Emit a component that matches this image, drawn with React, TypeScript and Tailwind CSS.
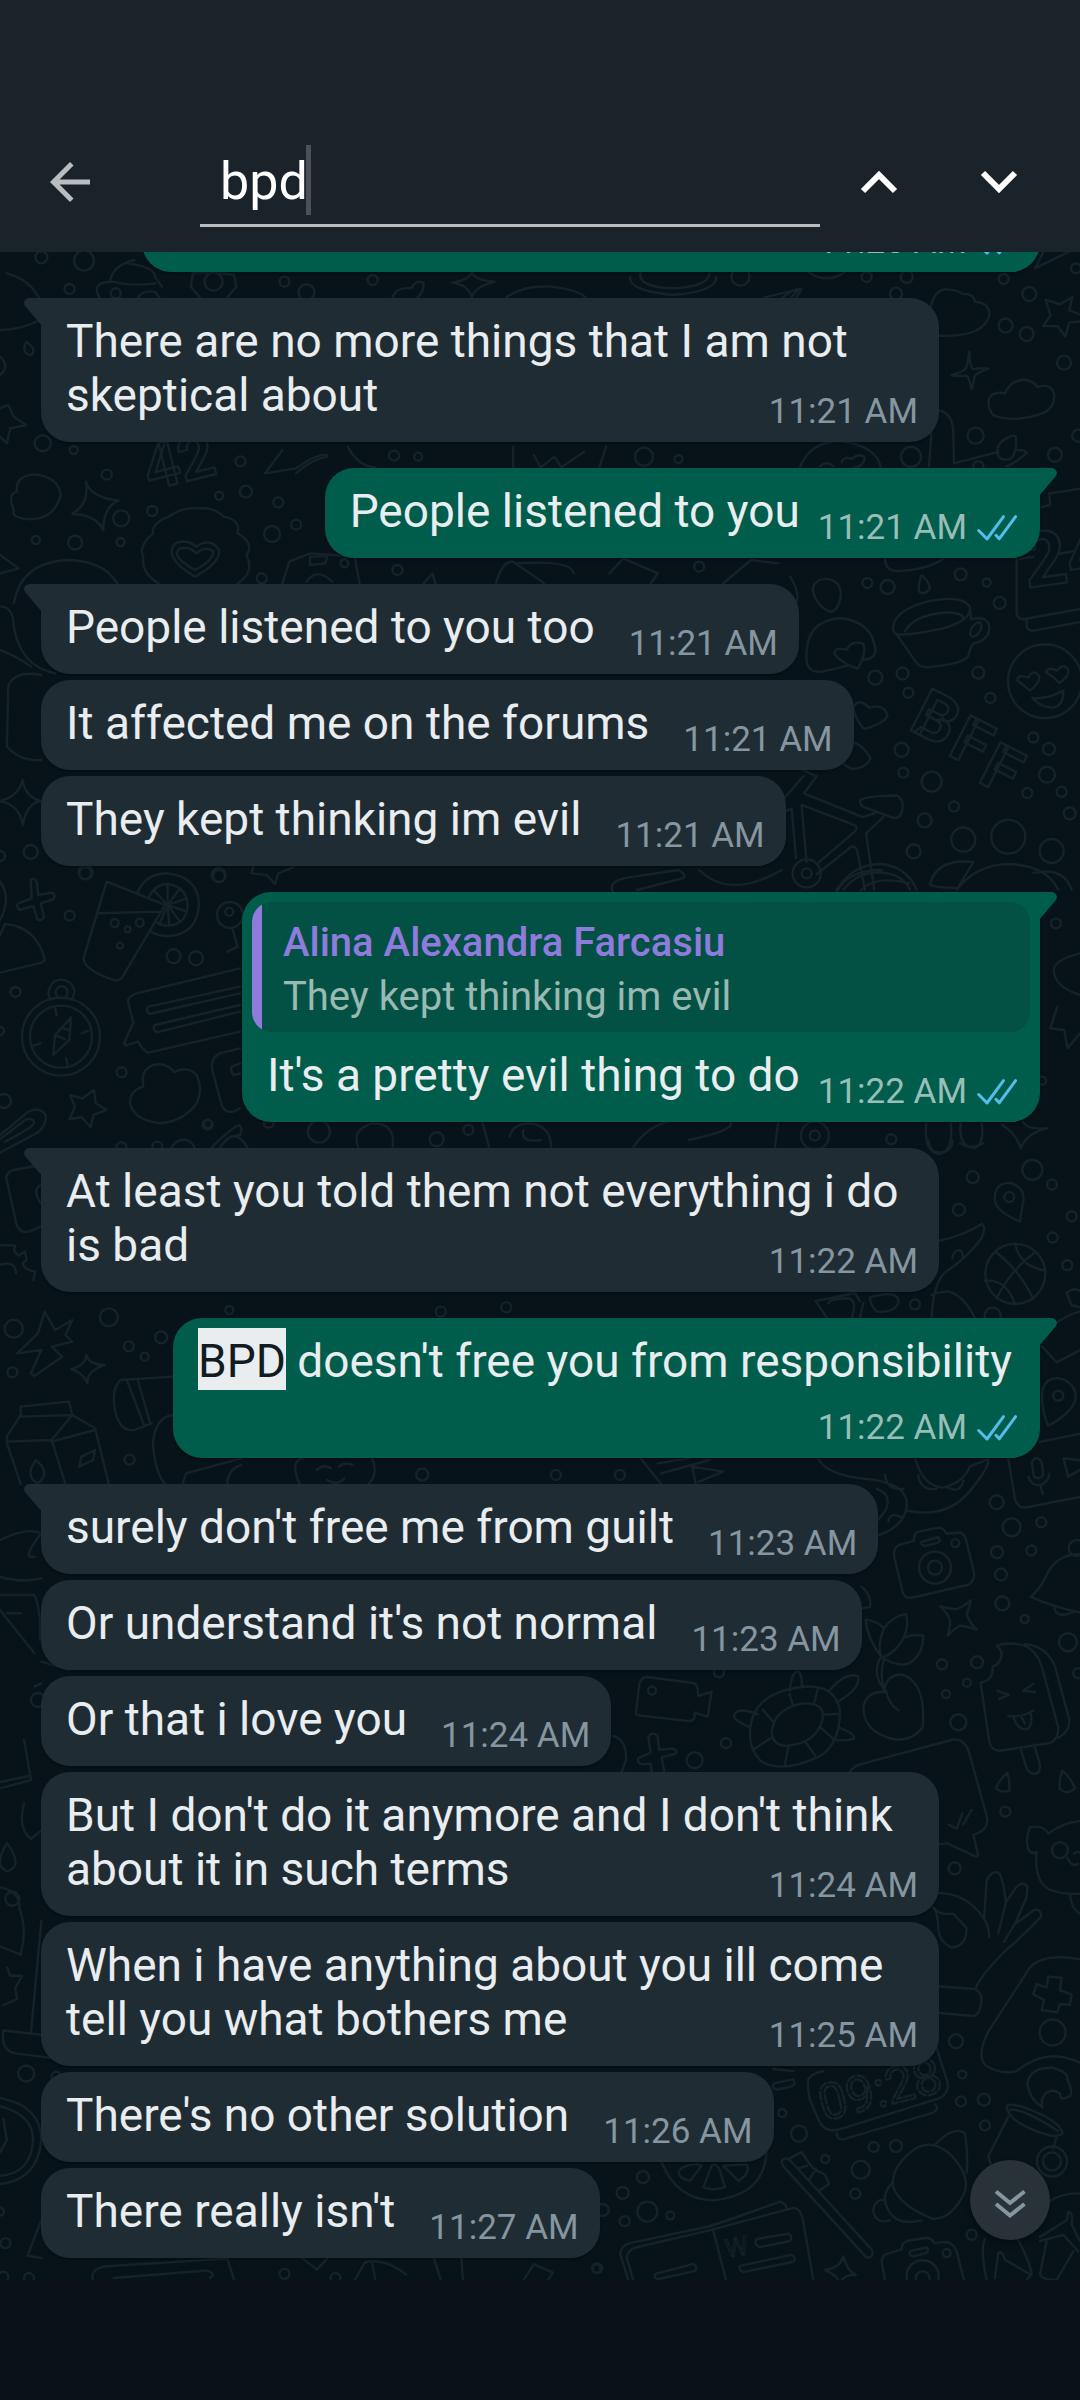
import React, { useState } from "react";
import { MdArrowBack } from "react-icons/md";

/* ---------- Wallpaper ---------- */

type Cluster = {
  x: number;
  y: number;
  sx: number;
  sy: number;
  d: string;
  rings: [number, number, number][];
};

const clusters: Cluster[] = [
  {
    x: 780, y: 250, sx: 0.3333, sy: 0.408,
    d:
      "M452 140 Q465 90 510 97 Q540 100 548 108 Q580 105 585 127 Q630 130 628 160 Q610 215 477 210" +
      "M900 158 L868 148 L877 115 L840 133 L797 122 L812 160 L790 186 L833 187 L856 212 L868 178 L900 175" +
      "M568 250 Q570 290 580 292 Q605 288 626 291 Q590 302 584 308 Q580 330 575 341 Q566 312 560 308 Q535 310 514 307 Q550 298 558 290 Q565 270 568 250Z" +
      "M640 405 Q620 385 628 362 Q645 345 675 352 Q690 318 735 318 Q765 322 772 336 Q815 325 823 355 Q825 385 790 400 Q700 425 640 405Z" +
      "M447 530 L455 440 M477 393 Q520 400 520 450 L522 523 L655 495 M655 505 Q645 480 672 465 Q705 450 708 458 Q712 500 690 512 Q665 518 655 505 M710 490 Q740 490 740 498 Q700 525 680 530" +
      "M807 597 L900 585 M808 597 L810 625 L785 630" +
      "M710 757 V890 Q712 905 730 905 L900 880 M740 907 V922 Q745 935 760 933 L900 912 M835 745 L880 738 M720 757 L760 752" +
      "M712 1055 Q712 1038 745 1048 Q760 1025 778 1045 Q780 1060 750 1080 Q730 1065 712 1055Z M798 1035 Q805 1020 832 1031 Q850 1010 865 1030 Q868 1045 838 1061 Q820 1045 798 1035Z M757 1098 Q800 1102 850 1080 Q852 1115 820 1122 Q780 1120 757 1098Z" +
      "M340 920 Q350 880 450 860 Q550 845 570 875 Q575 905 500 925 Q400 945 350 942 Q335 935 340 920Z M375 935 Q400 895 500 888 Q545 890 550 900 M350 942 L408 1010 Q420 1025 450 1022 Q550 1015 565 995 Q570 975 580 965 Q628 955 628 925 Q625 895 573 905 L570 875 M570 940 Q575 915 600 912 Q610 925 595 940 Q575 955 570 940Z" +
      "M425 797 Q410 830 420 840 Q440 845 450 828 Q445 810 425 797Z" +
      "M98 830 Q105 805 140 806 Q185 810 182 850 Q175 885 150 887 Q105 870 98 830Z" +
      "M80 1010 Q70 910 180 902 Q280 910 287 985 Q280 1005 245 1005 M205 1018 L125 1034 Q85 1035 80 1010 M163 990 Q165 972 200 980 Q215 955 250 965 Q260 990 233 1026 Q190 1015 163 990Z" +
      "M220 1122 Q235 1095 268 1122 Q310 1110 323 1140 Q315 1160 252 1174 Q225 1150 220 1122Z" +
      "M213 1210 Q235 1200 272 1245 Q260 1270 215 1272 L180 1255 M315 757 Q315 785 350 787 Q440 785 490 757" +
      "M60 532 Q90 470 180 468 Q290 480 302 532 M185 520 Q190 505 215 512 Q240 495 255 510 Q250 530 220 535 M120 530 Q140 515 160 530" +
      "M70 1275 L110 1290 L72 1332 L248 1390 L285 1380 M240 1350 Q250 1338 350 1337 Q370 1345 368 1365 Q365 1395 340 1392 L250 1365 Q240 1360 240 1350 M310 1390 L258 1430 L283 1568 M0 1355 L70 1290 M65 1365 L80 1500 M65 1360 L225 1410 Q235 1415 225 1425 L110 1505 M0 1380 L35 1370 L48 1490 M110 1530 L215 1462 Q228 1460 232 1475 L255 1568 M170 1568 Q220 1505 300 1505 Q380 1510 410 1568 M190 1568 Q230 1525 300 1525 Q370 1530 390 1568" +
      "M450 1555 Q470 1490 580 1500 L530 1568 Q590 1505 690 1505 Q800 1510 835 1568 M760 1527 Q850 1510 875 1568 M450 1555 Q455 1562 530 1564" +
      "M765 45 L790 5 M765 45 L865 5 M5 118 Q50 90 65 97 L50 115 M85 54 Q140 85 195 54 M30 800 Q60 840 50 860",
    rings: [
      [795, 1057, 37], [80, 1528, 5], [80, 1528, 14], [550, 1445, 12], [685, 1438, 17], [815, 1473, 12],
      [260, 66, 5], [380, 66, 6], [348, 107, 6], [671, 71, 5], [748, 108, 7], [677, 185, 7], [740, 206, 7], [852, 276, 7],
      [587, 455, 8], [393, 507, 10], [825, 502, 7], [895, 455, 6], [595, 530, 5], [542, 795, 6], [262, 816, 5], [323, 826, 7],
      [620, 815, 4], [659, 865, 6], [286, 1048, 7], [368, 1038, 6], [595, 1036, 6], [385, 1085, 5], [631, 1098, 5],
      [760, 1195, 5], [807, 1223, 6], [365, 1225, 7], [370, 1281, 5], [455, 1303, 10], [801, 1286, 8], [742, 1331, 5],
      [845, 1328, 5], [522, 1364, 5], [434, 1398, 7], [869, 1381, 6], [401, 1474, 7], [888, 45, 5],
    ],
  },
  {
    x: 780, y: 1140, sx: 0.3333, sy: 0.408,
    d:
      "M645 150 Q640 105 690 105 Q735 115 730 150 L720 200 Q650 175 645 150Z M787 640 Q780 585 835 583 Q890 595 887 635 Q875 670 805 700 Q790 675 787 640Z" +
      "M477 247 Q550 235 605 206 Q620 212 605 240 Q560 290 495 325 Q460 350 455 435 M455 380 Q480 370 510 372 Q555 385 585 437 M517 290 Q520 270 540 270 Q550 275 548 290" +
      "M706 256 Q720 310 797 320 M615 345 Q680 340 705 403 M648 275 Q720 320 760 390 M650 388 Q690 320 765 275" +
      "M107 395 L225 375 L240 395 M107 395 L140 435 M145 400 Q150 390 200 388 Q235 388 215 437 M240 435 L250 400 M270 385 Q360 365 355 400 Q340 425 290 420 Q270 405 270 385" +
      "M815 455 Q860 430 900 420 M785 505 L830 545 L900 515 M860 375 Q880 360 900 370 M860 375 L875 405 L900 410" +
      "M405 780 Q430 850 490 852 Q550 840 570 800 L625 782 Q630 800 570 860 Q500 930 380 908 M415 822 Q420 860 470 855 M500 850 Q540 870 550 835 M115 782 Q140 820 250 830 Q390 840 380 900 Q370 950 290 970 M290 855 Q340 870 315 910 L290 935 M315 820 Q320 860 370 855 M325 935 Q330 910 365 925" +
      "M685 782 L705 880 Q715 905 740 900 L900 875 M780 740 L900 720 M755 790 Q770 770 785 790 L790 820 Q780 835 762 825Z M745 825 Q755 850 785 845 Q808 835 808 818 M782 848 L788 868 M900 785 L850 780 L865 825 L900 808" +
      "M345 1030 Q335 1000 360 992 L402 982 Q400 965 415 960 L475 950 Q490 950 500 965 L540 962 Q555 965 560 985 L582 1060 Q585 1080 565 1090 L395 1122 Q375 1125 368 1108Z M425 985 L475 973 Q485 985 470 988 L435 995 Q420 992 425 985Z" +
      "M573 1128 Q565 1155 560 1162 Q570 1185 590 1200 Q550 1190 540 1190 Q520 1200 503 1215 Q512 1185 510 1178 Q500 1155 480 1143 Q520 1150 530 1150 Q550 1145 573 1128Z" +
      "M900 1015 Q830 1015 800 1065 Q790 1090 753 1120 Q820 1145 900 1158 M822 1145 Q830 1175 878 1157" +
      "M312 1197 Q340 1165 378 1162 Q390 1200 360 1235 Q330 1265 305 1268 Q260 1220 257 1175 Q295 1180 312 1197 Q290 1240 305 1268 Q370 1300 400 1275 Q430 1255 430 1215 Q400 1210 378 1218 M300 1270 Q275 1310 315 1350 M312 1272 Q295 1320 320 1355 Q325 1380 355 1398 M312 1350 Q320 1310 365 1310 Q440 1330 428 1440 Q400 1470 350 1470 Q250 1455 250 1390 Q260 1350 312 1353" +
      "M650 1240 Q670 1232 710 1235 Q765 1240 785 1290 L835 1440 Q835 1470 810 1478 L660 1497 Q635 1498 628 1475 L602 1330 Q640 1325 638 1290 Q665 1285 665 1255 Q660 1245 650 1240 M735 1236 Q800 1240 825 1290 L868 1420 Q870 1450 835 1465 M722 1492 L740 1540 Q755 1560 775 1550 Q783 1540 778 1525 L762 1482 M652 1350 L687 1360 L658 1370 M760 1333 L730 1350 L765 1353 M685 1412 Q730 1415 760 1398 M700 1412 Q710 1445 740 1445 Q760 1435 752 1405 M725 1415 L735 1430" +
      "M245 1095 Q275 1115 270 1145 L245 1148 M445 0 Q450 35 485 30 Q520 25 517 0 M540 8 Q570 25 610 8",
    rings: [
      [688, 140, 5], [835, 627, 5], [706, 328, 30], [465, 1048, 16], [465, 1048, 7], [526, 988, 4], [890, 1000, 8],
      [757, 73, 10], [578, 91, 6], [816, 109, 5], [537, 171, 6], [875, 187, 5], [818, 239, 5], [862, 307, 5], [405, 403, 5],
      [638, 430, 8], [650, 888, 7], [695, 949, 9], [784, 937, 5], [754, 1006, 5], [651, 1010, 6], [663, 1065, 6],
      [667, 1136, 7], [734, 1174, 4], [864, 1231, 9], [486, 1285, 5], [591, 1280, 6], [561, 1330, 4], [498, 1358, 4],
      [535, 1427, 8], [895, 1307, 5],
    ],
  },
  {
    x: 580, y: 1640, sx: 0.3333, sy: 0.4145,
    d:
      "M168 175 L178 105 Q185 88 205 90 L335 103 Q355 105 353 122 L355 135 L395 125 L383 185 L345 175 L342 190 Q335 197 320 195 L190 183 Q165 182 168 175Z" +
      "M253 318 L245 283 L285 275 Q295 268 280 262 L238 265 L232 230 Q215 220 205 235 L212 272 L175 285 Q170 295 185 300 L212 298 L215 318" +
      "M510 220 Q515 150 600 125 Q760 85 780 170 Q780 250 720 280 Q600 325 540 290 Q508 265 510 220Z M575 225 Q580 165 670 153 Q735 150 728 190 Q710 250 620 255 Q580 255 575 225Z M548 168 L578 195 M628 130 L640 160 M713 120 L703 150 M778 178 L728 180 M760 238 L720 210 M705 278 L675 245 M615 300 L625 258 M525 262 L575 235" +
      "M510 210 Q460 195 462 180 Q475 160 535 180 M630 122 Q635 75 655 75 Q668 85 665 115 M750 120 Q800 75 835 88 Q840 120 770 150 M778 212 Q825 225 822 238 Q800 245 758 240" +
      "M810 318 Q820 305 840 300 L1120 240 Q1150 238 1165 265 L1222 430 Q1225 460 1180 470 L1195 520 Q1190 525 1175 518 L1100 490 L1077 493 M1105 445 L1130 455 L1147 418 M1150 445 L1175 410" +
      "M1282 320 Q1245 350 1250 360 Q1270 370 1288 363 Q1290 340 1282 320Z M1447 315 Q1435 345 1440 360 Q1460 375 1485 358 Q1475 335 1447 315Z" +
      "M1500 437 Q1450 440 1405 467 Q1390 445 1350 452 Q1335 480 1345 505 Q1355 518 1370 512 Q1360 590 1420 605 Q1460 615 1500 612 M1462 525 Q1475 550 1495 540 M1482 515 Q1490 510 1500 512 M1470 615 Q1475 650 1500 660" +
      "M1070 610 Q1160 610 1210 670 Q1228 690 1228 718 M1213 668 L1220 580 Q1240 550 1260 565 L1270 590 L1278 632 L1255 708 M1278 632 L1310 595 Q1330 580 1342 595 L1340 620 L1305 685 L1272 728 M1305 685 L1365 650 Q1385 650 1383 668 Q1340 705 1290 740 Q1210 800 1185 842 Q1205 850 1205 870 Q1200 905 1180 907 L1077 900 M1185 842 L1077 836 M1060 645 Q1075 665 1120 660 L1160 695 Q1160 740 1115 742 Q1080 730 1075 700 Q1075 660 1060 645" +
      "M1500 770 Q1390 755 1350 790 L1225 945 Q1190 1000 1215 1025 Q1260 1050 1310 1040 Q1400 980 1500 1020 M1405 812 L1445 815 L1440 845 L1475 855 L1470 880 L1440 878 L1432 898 L1385 893 L1392 868 L1360 855 L1370 830 L1400 838Z" +
      "M730 1040 Q695 1045 685 1060 Q680 1070 690 1110 L720 1165 Q740 1190 780 1180 L1080 1105 Q1110 1090 1102 1065 L1070 985 M770 1190 Q770 1205 790 1205 L1060 1140 Q1080 1130 1065 1120 M580 1035 L640 1040 M580 1080 Q575 1070 590 1068 L640 1060 Q650 1075 630 1078 L590 1085Z" +
      "M1342 1070 Q1350 1030 1420 1032 Q1470 1045 1462 1060 Q1480 1090 1470 1100 Q1440 1115 1440 1095 Q1420 1080 1395 1095 Q1380 1110 1388 1128 Q1350 1110 1342 1070Z" +
      "M1280 1125 Q1290 1115 1340 1130 Q1440 1160 1448 1190 Q1430 1205 1370 1185 Q1285 1160 1280 1125Z M1290 1133 Q1330 1130 1435 1185 M1285 1150 L1225 1245 L1232 1265 M1430 1200 L1420 1225" +
      "M940 1320 Q930 1270 1010 1225 Q1060 1205 1110 1240 Q1170 1290 1155 1330 Q1120 1395 1060 1397 Q960 1365 940 1320Z M1062 1220 Q1120 1170 1155 1190 Q1165 1240 1160 1285 M935 1312 Q900 1340 925 1375 Q950 1415 1025 1400 M915 1350 Q880 1350 880 1380 Q890 1410 930 1400" +
      "M605 1260 Q610 1245 630 1255 L875 1470 Q885 1490 860 1490 L610 1270Z M630 1250 L665 1235 L685 1260 L700 1275 L735 1290 L748 1312 L715 1330 M655 1275 L682 1268 M690 1300 L708 1275" +
      "M245 1260 Q290 1350 400 1352 Q560 1340 560 1225 M295 1285 Q305 1265 350 1265 L365 1268 L330 1305 Q300 1300 295 1285Z M395 1268 Q410 1260 420 1280 L435 1320 Q400 1330 370 1320Z M430 1268 L500 1265 Q515 1285 475 1305Z" +
      "M145 1544 L120 1480 Q125 1460 150 1455 L385 1415 Q410 1410 600 1355 Q620 1360 620 1372 M160 1544 L140 1490 Q145 1470 170 1465 L385 1425 L640 1370 Q660 1370 668 1395 L700 1544 M400 1425 L438 1544 M225 1530 L340 1505 Q355 1512 345 1522 L235 1542 Q220 1540 225 1530 M530 1445 L625 1432 Q640 1440 630 1450 L540 1465 Q520 1460 530 1445Z M480 1510 L635 1483 Q650 1490 640 1500 L490 1525 Q475 1520 480 1510Z" +
      "M785 1544 Q800 1530 828 1532 Q800 1520 790 1487 Q780 1515 735 1520 Q765 1530 775 1544" +
      "M915 1544 L905 1500 Q905 1485 925 1480 L965 1470 Q965 1455 980 1450 L1040 1442 Q1060 1445 1062 1455 L1100 1452 Q1120 1455 1130 1475 L1152 1544 M990 1475 L1040 1465 Q1050 1475 1035 1480 L1000 1487 Q985 1485 990 1475Z" +
      "M1220 1544 Q1200 1470 1215 1445 M1310 1440 Q1350 1500 1355 1530 L1340 1544 M1245 1540 L1255 1480 Q1265 1470 1275 1495 L1350 1530 M1395 1375 Q1410 1335 1500 1335 M1380 1440 L1460 1400 L1465 1380 Q1480 1380 1475 1410 L1500 1450 M1380 1450 L1450 1435 L1495 1475 M1400 1450 L1380 1530 Q1385 1544 1430 1544 L1480 1475" +
      "M100 232 Q140 240 138 290 L125 318",
    rings: [
      [216, 122, 4], [1440, 507, 8], [1418, 947, 13], [1416, 1258, 9], [1416, 1258, 15], [1028, 1540, 7], [1028, 1535, 16],
      [1100, 1479, 4], [438, 249, 5], [344, 290, 8], [1276, 414, 5], [1124, 551, 6], [1128, 968, 7], [1147, 1048, 4],
      [1143, 1113, 5], [1212, 1109, 6], [1215, 1171, 5], [607, 1141, 4], [657, 1191, 8], [881, 1223, 5], [948, 1221, 6],
      [736, 1252, 4], [842, 1278, 9], [826, 1336, 5], [189, 1296, 6], [128, 1334, 6], [202, 1379, 10], [271, 1388, 4],
      [134, 1402, 5], [68, 1375, 6], [1175, 1435, 5], [50, 1516, 4], [417, 78, 5],
    ],
  },
  {
    x: 0, y: 780, sx: 0.3333, sy: 0.3333,
    d:
      "M165 685 L170 705 M245 760 L265 752 M97 798 L122 790 M198 835 L203 855 M213 713 L208 780 L160 825 L165 765Z M165 765 L195 778 M190 745 L205 750 M152 660 Q140 640 150 622 Q160 598 185 599 Q215 602 223 630 Q222 650 215 660" +
      "M320 305 L495 375 L368 590 Q358 605 340 600 Q270 575 255 550 Q250 540 252 530Z M295 400 L485 395 M412 340 Q435 280 503 280 Q595 290 597 375 Q590 465 503 468 Q475 468 452 455 M445 355 Q465 312 503 312 Q560 320 563 375 Q560 435 503 437 Q485 437 472 428 M503 375 L503 312 M503 375 L540 325 M503 375 L560 355 M503 375 L560 395 M503 375 L540 425 M503 375 L508 437 M503 375 L480 428 M503 375 L465 335" +
      "M92 300 Q100 290 110 305 L115 345 L155 338 Q170 345 160 358 L122 370 L132 410 Q125 425 112 418 L100 378 L60 390 Q45 380 55 370 L95 355Z" +
      "M0 465 L15 432 Q110 440 135 540 L125 548 L0 578 M0 305 Q18 330 18 360 Q15 395 0 420" +
      "M720 565 L410 640 Q380 650 385 670 L400 728 L372 790 L378 796 L415 785 Q430 815 445 818 L720 755 M720 620 L445 680 Q435 690 447 702 L720 640 M720 675 L465 735 Q455 745 470 757 L720 695" +
      "M282 930 L287 970 L320 990 L280 1005 L272 1042 L245 1012 L208 1018 L225 980 L210 945 L248 955Z" +
      "M430 915 Q420 870 460 855 Q500 845 523 877 Q560 855 590 885 Q610 930 590 970 Q550 1025 480 1030 Q400 1020 390 970 Q390 930 430 920Z" +
      "M720 805 L660 820 Q630 835 637 870 L665 975 Q675 1000 700 995 L720 985 M720 850 L695 860 Q690 870 700 885 L720 880 M697 445 L713 500 L682 515" +
      "M0 1065 L85 995 Q120 978 137 1005 Q140 1040 110 1060 L0 1118 M0 1078 L75 1020 Q100 1010 102 1030 Q95 1045 15 1085" +
      "M122 1155 L40 1170 Q15 1180 20 1200 L50 1335 Q60 1360 85 1355 L122 1340 M122 1215 Q95 1230 122 1270" +
      "M0 1395 L45 1397 L42 1412 L55 1427 L75 1415 L80 1440 L68 1450 Q72 1470 105 1475 L100 1500 M0 1455 Q45 1440 48 1480" +
      "M68 0 Q75 50 122 63 Q80 70 68 136 Q60 75 0 63 Q55 50 68 0Z" +
      "M635 1102 Q700 1040 718 1035 Q730 1045 720 1065 L700 1070 M660 1102 Q690 1060 710 1070 Q730 1080 742 1102 M515 1102 Q530 1075 560 1080 Q580 1090 583 1102 M760 260 L755 280 L800 285 L825 312 L835 280 L880 262",
    rings: [
      [183, 770, 39], [183, 770, 31], [185, 637, 6], [344, 429, 4], [383, 448, 3], [419, 428, 4], [360, 497, 3],
      [690, 405, 13], [688, 395, 4], [92, 216, 7], [0, 228, 5], [257, 277, 7], [209, 407, 5], [656, 286, 7], [521, 529, 7],
      [588, 535, 7], [46, 636, 5], [0, 753, 4], [365, 877, 5], [12, 963, 7], [623, 1034, 5], [364, 1102, 5], [472, 1100, 5],
      [806, 1028, 5],
    ],
  },
  {
    x: 0, y: 100, sx: 0.6888, sy: 0.3333,
    d:
      "M10 520 Q45 540 58 600 M0 690 Q30 690 58 660 M160 540 Q165 495 195 480 M165 545 Q190 560 225 550 M145 595 Q130 545 165 545 M200 595 Q205 570 225 575 L232 595 M185 490 Q225 500 225 530 L235 560" +
      "M290 592 L277 560 L280 520 L300 518 L320 520 L340 525 L343 560 L330 592 M570 592 Q575 560 597 565 Q605 535 615 550 Q615 580 605 594 M685 518 Q690 540 718 545 Q690 560 685 592 Q680 555 657 548 Q680 540 685 518 M735 592 Q760 555 800 560 Q840 570 850 592" +
      "M915 530 Q910 570 975 585 Q1040 575 1040 530 M930 518 Q925 560 975 565 Q1030 560 1030 518 M1110 592 L1160 568 L1150 590" +
      "M38 725 Q55 750 45 765 Q30 760 38 725Z M0 770 Q15 800 0 825 M0 925 L12 915 L20 950 L38 975 L15 985 L10 1030 L0 1010",
    rings: [
      [168, 580, 5], [310, 545, 9], [60, 472, 6], [122, 482, 10], [101, 567, 5], [413, 545, 5], [445, 577, 8], [541, 540, 5],
      [1075, 530, 9], [62, 1030, 8], [107, 1050, 4],
    ],
  },
  {
    x: 0, y: 440, sx: 0.6888, sy: 0.3333,
    d:
      "M20 210 Q10 160 25 155 Q20 110 50 103 Q85 110 88 165 Q80 235 45 238 Q15 235 20 210Z M125 125 Q130 170 172 182 Q150 200 150 270 Q140 225 105 222 Q130 190 125 125Z" +
      "M230 430 Q205 400 208 350 Q200 320 222 280 Q220 250 245 230 Q265 200 288 205 Q310 200 325 230 Q350 240 345 280 Q370 310 358 345 Q370 400 345 430 M283 410 Q235 350 255 310 Q270 295 285 320 Q305 290 318 330 Q320 370 283 410Z M283 390 Q245 345 262 325 Q275 318 285 340 Q300 315 310 335 Q308 365 283 390Z" +
      "M410 30 L385 100 L430 85 Q460 40 475 45 M430 100 Q450 60 475 50 M410 430 L420 365 L450 340 L515 350 L522 430 M450 350 L475 350 L472 370 L450 375Z M445 425 Q460 380 482 425" +
      "M20 490 Q30 370 95 360 Q150 360 170 430 M0 500 Q20 500 20 560 Q30 680 80 700 M0 630 Q25 650 45 680 M60 705 Q20 690 12 740 L10 920 Q30 965 60 960 M0 345 L27 385 L0 400" +
      "M615 430 L628 400 L632 430 M720 430 Q730 360 745 365 L790 430 M750 370 Q830 360 833 400 M885 400 L905 355 L955 400 L945 430 M1050 430 L1090 360 L1130 370 M505 20 Q520 80 545 82 M745 20 L745 82 M880 20 L870 82 M775 45 L785 82 L805 50 L815 82 L848 35",
    rings: [
      [155, 104, 5], [349, 64, 5], [318, 167, 4], [357, 155, 6], [404, 187, 5], [430, 254, 5], [395, 282, 8], [176, 235, 8],
      [221, 213, 5], [52, 300, 4], [109, 308, 7], [175, 306, 4], [380, 415, 5], [500, 370, 4], [577, 390, 5], [572, 47, 5],
      [607, 50, 4], [935, 50, 9], [985, 57, 4], [1015, 380, 5],
    ],
  },
  {
    x: 0, y: 870, sx: 0.6888, sy: 0.3333,
    d:
      "M1568 250 Q1530 270 1530 300 Q1530 350 1568 375 M1535 410 L1525 475 L1545 480 L1550 535 L1568 490 M1485 755 Q1490 780 1520 775 Q1490 790 1482 835 Q1475 790 1455 765" +
      "M890 66 Q880 30 920 20 L985 0 Q1000 20 990 25 L925 60 M1015 0 Q1060 90 1135 0 M1215 66 Q1230 0 1280 0 M1250 60 Q1270 15 1320 40" +
      "M520 830 Q510 780 540 760 Q575 760 570 830 M700 755 L710 830 M740 800 Q745 760 770 760 Q800 770 800 830 M760 780 Q755 820 785 810 M920 830 Q940 770 970 755 M1060 755 Q1070 780 1000 810 M1130 755 L1125 830 M1345 755 Q1340 850 1365 852 Q1385 840 1380 755 M1395 755 Q1390 830 1415 835 Q1430 820 1425 755",
    rings: [
      [463, 785, 11], [302, 762, 4], [634, 808, 7], [680, 780, 5], [1183, 797, 14], [1183, 797, 5], [1294, 808, 5],
      [1513, 632, 4], [1533, 160, 5], [318, 18, 6], [124, 10, 6],
    ],
  },
  {
    x: 0, y: 1300, sx: 0.6888, sy: 0.3333,
    d:
      "M125 165 Q130 195 152 195 Q125 215 127 250 Q120 215 103 208 Q125 195 125 165Z M65 35 L55 100 L25 160 L60 150 L45 220 L50 228 L90 170 L75 140 L105 125 L95 105 L105 60 L80 90Z" +
      "M30 320 L30 345 L10 410 L10 430 L30 552 M30 320 L100 305 L105 345 L138 385 L158 552 M30 350 L105 345 M10 425 L75 420 L105 345 M75 420 L95 552 M75 425 L138 390 M52 480 Q35 530 55 550 Q75 520 52 480Z M118 470 L138 450 L135 480 L115 500Z" +
      "M250 230 L175 240 Q160 270 168 340 Q175 395 195 390 L220 370 M185 245 L210 380 M200 240 L218 370 M252 345 Q225 350 222 430 Q225 520 240 552" +
      "M435 552 Q420 480 440 475 M540 475 Q550 520 535 552 M460 510 Q470 490 480 505 M492 500 Q500 485 512 495 M475 540 Q490 560 500 535 M930 475 L960 552 M955 490 L1000 475 M960 520 L1030 480 M1010 552 L1005 500 L1050 515 L1015 545 M265 552 L270 520 L350 475 M330 552 Q330 510 350 495" +
      "M0 720 Q40 680 60 700 Q30 780 50 770 M0 830 Q30 850 60 835 M0 885 L50 885 Q60 930 58 1020 M0 930 L50 1060 M10 940 L30 940 M60 1085 L100 1110 M50 1160 L60 1150",
    rings: [
      [20, 86, 9], [158, 52, 9], [187, 139, 5], [210, 170, 4], [234, 112, 6], [18, 217, 5], [188, 479, 5], [613, 524, 6],
      [807, 525, 5], [900, 525, 5], [640, 35, 5], [735, 22, 5], [333, 30, 4], [55, 1200, 7],
    ],
  },
  {
    x: 0, y: 1740, sx: 0.6888, sy: 0.421,
    d:
      "M0 115 L45 95 L35 0 M0 100 L43 85 M35 150 Q25 210 45 235 L60 215 M10 245 Q-10 300 10 312 Q35 300 10 245Z M0 350 Q30 360 28 400 Q40 450 30 510 L0 490 M10 540 L15 560 L32 560 L22 590 L25 615 L5 630" +
      "M60 700 L5 690 Q0 740 25 745 L75 755 M60 430 L45 695 M0 850 Q60 870 60 950 Q55 1045 0 1055 M0 870 Q48 890 48 950 Q45 1030 0 1035 M5 900 L10 950 L0 980 M60 1140 L40 1225 L60 1230" +
      "M135 1283 Q130 1255 155 1250 L330 1232 L340 1283 M165 1278 L300 1260 Q315 1268 305 1278 M515 1283 L530 1240 Q560 1230 590 1270 M540 1240 L545 1283 M440 1232 L460 1258 L475 1232 M630 1232 L640 1283 M670 1232 L672 1283 M760 1283 L775 1245 L803 1265 L795 1283",
    rings: [
      [18, 377, 7], [38, 792, 8], [82, 800, 5], [413, 1268, 5], [487, 1278, 5], [867, 1255, 5], [0, 1120, 4], [8, 1195, 5],
      [5, 1275, 5], [42, 1278, 5],
    ],
  },
];

function Wallpaper() {
  return (
    <svg
      aria-hidden="true"
      viewBox="0 252 1080 2028"
      preserveAspectRatio="xMidYMid slice"
      className="absolute inset-0 h-full w-full"
      fill="none"
      stroke="#152329"
      strokeWidth="2.4"
      strokeLinecap="round"
      strokeLinejoin="round"
    >
      {clusters.map((c, i) => (
        <g key={i}>
          <path
            d={c.d}
            transform={`translate(${c.x} ${c.y}) scale(${c.sx} ${c.sy})`}
            vectorEffect="non-scaling-stroke"
          />
          {c.rings.map(([x, y, r], j) => (
            <circle key={j} cx={c.x + x * c.sx} cy={c.y + y * c.sy} r={r} />
          ))}
        </g>
      ))}
      <g fontFamily="Roboto, sans-serif" fontWeight="700" textAnchor="middle">
        <text fontSize="66" transform="translate(926 738) rotate(27)">B</text>
        <text fontSize="64" transform="translate(962 762) rotate(27)">F</text>
        <text fontSize="64" transform="translate(992 789) rotate(27)">F</text>
        <text fontSize="62" transform="translate(184 482) rotate(-14)">42</text>
        <text fontSize="76" transform="translate(1070 582) rotate(-8)">24</text>
        <text fontSize="50" fontWeight="400" strokeDasharray="8 3" transform="translate(884 2106) rotate(-14)">09:28</text>
        <text fontSize="26" fontWeight="400" strokeWidth="1" transform="translate(738 2256) rotate(-10)">W</text>
      </g>
    </svg>
  );
}

/* ---------- Messages ---------- */

type Message = {
  out?: boolean;
  tail?: boolean;
  text: React.ReactNode;
  time: string;
  quote?: { name: string; text: string };
  className?: string;
  timeBelow?: boolean;
};

const messages: Message[] = [
  { out: true, text: null, time: "11:20 AM", className: "w-[898px]" },
  { tail: true, text: "There are no more things that I am not skeptical about", time: "11:21 AM" },
  { out: true, tail: true, text: "People listened to you", time: "11:21 AM" },
  { tail: true, text: "People listened to you too", time: "11:21 AM" },
  { text: "It affected me on the forums", time: "11:21 AM" },
  { text: "They kept thinking im evil", time: "11:21 AM" },
  {
    out: true,
    tail: true,
    text: "It's a pretty evil thing to do",
    time: "11:22 AM",
    quote: { name: "Alina Alexandra Farcasiu", text: "They kept thinking im evil" },
  },
  { tail: true, text: "At least you told them not everything i do is bad", time: "11:22 AM" },
  {
    out: true,
    tail: true,
    text: (
      <>
        <mark className="bg-[#e9edef] pt-[6px] pb-[2px] text-[#111b21]">BPD</mark> doesn't free you from responsibility
      </>
    ),
    time: "11:22 AM",
    className: "max-w-[867px]",
    timeBelow: true,
  },
  { tail: true, text: "surely don't free me from guilt", time: "11:23 AM" },
  { text: "Or understand it's not normal", time: "11:23 AM" },
  { text: "Or that i love you", time: "11:24 AM" },
  { text: "But I don't do it anymore and I don't think about it in such terms", time: "11:24 AM" },
  { text: "When i have anything about you ill come tell you what bothers me", time: "11:25 AM" },
  { text: "There's no other solution", time: "11:26 AM" },
  { text: "There really isn't", time: "11:27 AM" },
];

function Ticks() {
  return (
    <svg
      role="img"
      aria-label="Read"
      viewBox="0 0 40 26"
      className="h-[26px] w-[40px]"
      fill="none"
      stroke="#53bdeb"
      strokeWidth="3"
      strokeLinejoin="round"
      strokeLinecap="round"
    >
      <path d="M1.7 15.5 L10 24 L26.5 1.7" />
      <path d="M19 20.3 L22.2 23.8 L38.6 1.7" />
    </svg>
  );
}

function Tail({ out }: { out?: boolean }) {
  return (
    <svg
      aria-hidden="true"
      viewBox="0 0 18 28"
      className={out ? "absolute top-0 -right-[17px] h-[28px] w-[18px] text-[#005c4b]" : "absolute top-0 -left-[17px] h-[28px] w-[18px] text-[#1f2c34]"}
      fill="currentColor"
    >
      <path d={out ? "M0 0 H13 Q20 2 17 8 L0 28Z" : "M18 0 H5 Q-2 2 1 8 L18 28Z"} />
    </svg>
  );
}

function Bubble({ m, first }: { m: Message; first: boolean }) {
  const gap = m.tail && !first ? "mt-[26px]" : "mt-[6px]";
  const side = m.out
    ? "self-end bg-[#005c4b] " + (m.tail ? "rounded-tr-none" : "")
    : "self-start bg-[#1f2c34] " + (m.tail ? "rounded-tl-none" : "");
  return (
    <li
      className={`relative shrink-0 rounded-[29px] text-[#e9edef] shadow-[0_2px_2px_rgba(0,0,0,0.25)] ${m.className ?? "max-w-[898px]"} ${gap} ${side}`}
    >
      {m.tail && <Tail out={m.out} />}
      {m.quote && (
        <blockquote className="mx-[10px] mt-[10px] flex overflow-hidden rounded-[20px] bg-[#025144] text-[40px] leading-[54px]">
          <span className="w-[10px] shrink-0 bg-[#8f7bdb]" />
          <div className="px-[21px] pt-[14px] pb-[8px]">
            <cite className="block font-medium not-italic text-[#8f7bdb]">{m.quote.name}</cite>
            <p className="text-[#99b9b2]">{m.quote.text}</p>
          </div>
        </blockquote>
      )}
      <div className={`flow-root pt-[16px] pb-[9px] pl-[25px] text-[46px] leading-[54px] ${m.out ? "pr-[23px]" : "pr-[21px]"}`}>
        <span>{m.text}</span>
        <span
          className={`float-right flex items-center gap-[10px] text-[35px] leading-[42px] ${m.timeBelow ? "mt-[19px]" : "mt-[23px]"} ${m.out ? "ml-[18px] text-[#99beb7]" : "ml-[34px] text-[#8696a0]"}`}
        >
          <time>{m.time}</time>
          {m.out && <Ticks />}
        </span>
      </div>
    </li>
  );
}

function Chevron({ d }: { d: string }) {
  return (
    <svg aria-hidden="true" viewBox="0 0 72 72" className="size-[72px]" fill="none" stroke="currentColor" strokeWidth="6">
      <path d={d} />
    </svg>
  );
}

export default function App() {
  const [query, setQuery] = useState("bpd");
  return (
    <div className="flex h-screen flex-col bg-[#0a1118] font-[Roboto,sans-serif]">
      <header className="relative z-10 flex shrink-0 items-center bg-[#1a2329] pt-[112px] pr-[45px] pl-[40px]">
        <button type="button" aria-label="Back" className="text-[#babdbf]">
          <MdArrowBack className="size-[60px]" />
        </button>
        <div className="relative my-[25px] mr-[23px] ml-[100px] min-w-0 flex-1">
          <input
            type="text"
            aria-label="Search"
            value={query}
            onChange={(e) => setQuery(e.target.value)}
            className="block h-[90px] w-full border-b-[3px] border-[#babdbf] bg-transparent pt-[2px] pl-[20px] text-[52px] text-white outline-none"
          />
          <span aria-hidden="true" className="absolute top-[8px] left-[106px] h-[70px] w-[5px] bg-[#4a5257]" />
        </div>
        <button type="button" aria-label="Previous result" className="text-white">
          <Chevron d="M20 45 L36 29 L52 45" />
        </button>
        <button type="button" aria-label="Next result" className="ml-[48px] text-white">
          <Chevron d="M20 27 L36 43 L52 27" />
        </button>
      </header>

      <main className="relative flex min-h-0 flex-1 flex-col justify-end overflow-hidden bg-[#071318]">
        <Wallpaper />
        <ol className="relative flex flex-col pr-[40px] pb-[22px] pl-[41px]">
          {messages.map((m, i) => (
            <Bubble key={i} m={m} first={i === 0} />
          ))}
        </ol>
        <button
          type="button"
          aria-label="Scroll to latest messages"
          className="absolute right-[30px] bottom-[40px] size-[80px] rounded-full bg-[#293238] shadow-[0_4px_6px_rgba(0,0,0,0.35)]"
        >
          <svg viewBox="0 0 80 80" aria-hidden="true" fill="none" stroke="#8696a0" strokeWidth="4">
            <path d="M26 31.5 L40 43 L54.5 31.5 M26 44 L40 55.5 L54.5 44" />
          </svg>
        </button>
      </main>

      <footer className="h-[120px] shrink-0" />
    </div>
  );
}
